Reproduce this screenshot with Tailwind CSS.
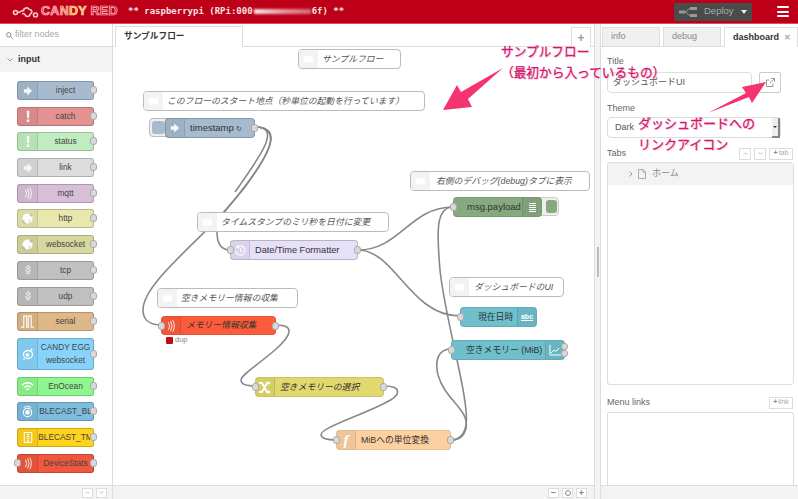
<!DOCTYPE html>
<html lang="ja">
<head>
<meta charset="utf-8">
<title>CANDY RED</title>
<script src="https://cdn.jsdelivr.net/npm/@tailwindcss/browser@4"></script>
</head>
<body class="m-0 bg-white">
<svg width="0" height="0" class="absolute">
  <symbol id="i-arrow" viewBox="0 0 12 14"><path d="M1 5h4V1.500L11 7l-6 5.500V9H1z" fill="#fff" fill-opacity=".9"/></symbol>
  <symbol id="i-bang" viewBox="0 0 12 14"><path d="M4.500 0h3.200l-.4 9H4.900zM4.600 10.500h3v3h-3z" fill="#fff" fill-opacity=".9"/></symbol>
  <symbol id="i-link" viewBox="0 0 12 14"><path d="M1 5h3V3l2 2V1l5 6-5 6V9L4 11V9H1z" fill="#fff" fill-opacity=".8"/></symbol>
  <symbol id="i-wave" viewBox="0 0 12 14"><path d="M3 2.500Q5.500 7 3 11.500M5.500 1Q9 7 5.500 13M8 0Q12 7 8 14" fill="none" stroke="#fff" stroke-opacity=".85" stroke-width="1.200"/></symbol>
  <symbol id="i-globe" viewBox="0 0 14 14"><circle cx="7" cy="7" r="6.500" fill="#fff" fill-opacity=".95"/><path d="M0 9l3 .5 1.500 4.500-3-1.500zM9 8.500l2 .5-2.500 4.500zM13.500 3.500 11 5l-2-3 2-1.500z" fill="#000" fill-opacity=".18"/></symbol>
  <symbol id="i-tcp" viewBox="0 0 12 14"><path d="M6 1l1 1-1 1zM4 3l1 1-1 1.500zM8 3l1 1-1 1.500zM6 5l1 1-1 1zM3.500 7l1 1-1 1zM8 7l1 1-1 1zM6 8l1 1-1 1zM4.500 10l1 1-1 1zM7 10l1 1-1 1z" fill="none" stroke="#fff" stroke-opacity=".8"/></symbol>
  <symbol id="i-serial" viewBox="0 0 14 14"><path d="M0 13h3V1h3v12h2V1h3v12h3" fill="none" stroke="#fff" stroke-width="1.300" stroke-opacity=".9"/></symbol>
  <symbol id="i-egg" viewBox="0 0 14 14"><ellipse cx="7" cy="7.500" rx="4.500" ry="4" fill="none" stroke="#fff" stroke-width="1.300"/><circle cx="6.500" cy="8" r="1.800" fill="#fff"/><path d="M10 1l2 2-2 1zM3 11l1 2-2-.5z" fill="#fff"/></symbol>
  <symbol id="i-wifi" viewBox="0 0 14 12"><path d="M1 4.500Q7-.5 13 4.500M3.200 7Q7 4 10.800 7M5.300 9.300Q7 8 8.700 9.300" fill="none" stroke="#fff" stroke-width="1.500"/></symbol>
  <symbol id="i-ble" viewBox="0 0 14 14"><circle cx="7" cy="8" r="4.500" fill="none" stroke="#fff" stroke-width="1.200"/><circle cx="7" cy="8" r="2.500" fill="#fff"/><path d="M3 2.500Q7 0 11 2.500" fill="none" stroke="#fff"/></symbol>
  <symbol id="i-tm" viewBox="0 0 12 14"><path d="M1.500 1h9v12h-9z" fill="none" stroke="#fff" stroke-width="1.200"/><path d="M4.500 3.500h3M4.500 6h3M4.500 8.500h3M4.500 11h3" stroke="#fff" stroke-width="1.400"/></symbol>
  <symbol id="i-bubble" viewBox="0 0 14 12"><path d="M2 1.500h10q1.500 0 1.500 4t-1.500 4H6L3 11.500V9.500H2Q.5 9.500.5 5.500T2 1.500z" fill="#fff"/></symbol>
</svg>

<div class="relative flex h-[499px] w-[798px] flex-col overflow-hidden font-['Liberation_Sans','Noto_Sans_CJK_JP',sans-serif] text-[#333]">

  <!-- header -->
  <header class="flex h-[24px] shrink-0 items-center border-b border-[#d8505f] bg-[#bd0018]">
    <svg class="ml-[12px] mr-[2px] h-[14px] w-[27px]" viewBox="0 0 27 14" fill="none" stroke="#f7c8cc" stroke-width="1.600"><circle cx="3.500" cy="7.500" r="2"/><path d="M5.500 7.500C8 7.500 9 6 11 5.500"/><path d="M11.500 6.500C11 3 16 1.500 17 4.500M17 4.500C20 4 21 8 18 9M18 9C18 12.500 13 12 13 9M13 9 10 8.500"/><circle cx="23.500" cy="10" r="2"/></svg>
    <span class="w-[78px] whitespace-nowrap text-[12.500px] font-bold tracking-[0.3px] [-webkit-text-stroke:0.7px_#ffc4cc]"><span class="text-[#e8475f]">C</span><span class="text-[#e8475f]">A</span><span class="text-[#ec7a1f]">N</span><span class="text-[#f3c21a]">D</span><span class="text-[#e5d72a]">Y</span> <span class="text-[#c8102e]">RED</span></span>
    <span class="ml-[9px] flex items-center whitespace-pre font-['DejaVu_Sans_Mono',monospace] text-[9px] font-bold text-[#f6e3e3]">** raspberrypi (RPi:000<span class="mx-[1px] h-[5px] w-[57px] bg-gradient-to-r from-white/90 via-white/60 to-white/40 blur-[1px]"></span>6f) **</span>
    <div class="ml-auto mr-[25px] flex h-[18px] w-[78px] items-center bg-[#4b4b4b]">
      <svg class="ml-[5px] h-[10px] w-[18px]" viewBox="0 0 18 10"><rect x="0" y="3.500" width="6" height="3" fill="#999"/><rect x="11" y="0" width="7" height="3" fill="#999"/><rect x="11" y="7" width="7" height="3" fill="#999"/><path d="M6 5C9 5 8 1.500 11 1.500M6 5C9 5 8 8.500 11 8.500" fill="none" stroke="#999"/></svg>
      <span class="ml-[7px] text-[9.500px] text-[#aaa]">Deploy</span>
      <svg class="ml-[7px] h-[4px] w-[6px]" viewBox="0 0 6 4"><path d="M0 0h6L3 4z" fill="#eee"/></svg>
    </div>
    <div class="mr-[9px] flex h-[11px] w-[12px] flex-col justify-between">
      <span class="h-[2px] rounded-full bg-white"></span><span class="h-[2px] rounded-full bg-white"></span><span class="h-[2px] rounded-full bg-white"></span>
    </div>
  </header>

  <main class="flex min-h-0 flex-1">
    <!-- palette -->
    <aside class="flex w-[113px] shrink-0 flex-col border-r border-[#ddd]">
      <div class="flex h-[23px] shrink-0 items-center border-b border-[#ddd] pl-[6px] text-[9px] text-[#aaa]">
        <svg class="mr-[2px] h-[7px] w-[7px]" viewBox="0 0 8 8" fill="none" stroke="#777" stroke-width="1"><circle cx="3.200" cy="3.200" r="2.500"/><path d="M5 5l2.500 2.500"/></svg>filter nodes
      </div>
      <div class="flex h-[25px] shrink-0 items-center bg-[#f3f3f3] pl-[7px] text-[9px] font-bold text-[#333]">
        <svg class="mr-[5px] h-[4px] w-[6px]" viewBox="0 0 6 4" fill="none" stroke="#999"><path d="M.5.500 3 3 5.500.500"/></svg>input
      </div>
      <div class="min-h-0 flex-1 pt-[9px] pl-[17px] text-[8.300px] leading-[17px] text-[#444]">
        <div class="relative mb-[6.700px] flex h-[19px] w-[77px] rounded-[3px] border border-black/20 bg-[#a6bbcf]"><div class="flex w-[20px] items-center justify-center border-r border-black/10 bg-black/5"><svg class="h-[12px] w-[10px]"><use href="#i-arrow"/></svg></div><span class="flex-1 text-center">inject</span><i class="absolute right-[-4px] top-[4px] h-[8px] w-[7px] rounded-[3px] border border-[#aaa] bg-[#d9d9d9]"></i></div>
        <div class="relative mb-[6.700px] flex h-[19px] w-[77px] rounded-[3px] border border-black/20 bg-[#e49191]"><div class="flex w-[20px] items-center justify-center border-r border-black/10 bg-black/5"><svg class="h-[13px] w-[10px]"><use href="#i-bang"/></svg></div><span class="flex-1 text-center">catch</span><i class="absolute right-[-4px] top-[4px] h-[8px] w-[7px] rounded-[3px] border border-[#aaa] bg-[#d9d9d9]"></i></div>
        <div class="relative mb-[6.700px] flex h-[19px] w-[77px] rounded-[3px] border border-black/20 bg-[#c0edc0]"><div class="flex w-[20px] items-center justify-center border-r border-black/10 bg-black/5"><svg class="h-[13px] w-[10px]"><use href="#i-bang"/></svg></div><span class="flex-1 text-center">status</span><i class="absolute right-[-4px] top-[4px] h-[8px] w-[7px] rounded-[3px] border border-[#aaa] bg-[#d9d9d9]"></i></div>
        <div class="relative mb-[6.700px] flex h-[19px] w-[77px] rounded-[3px] border border-black/20 bg-[#dddddd]"><div class="flex w-[20px] items-center justify-center border-r border-black/10 bg-black/5"><svg class="h-[12px] w-[10px]"><use href="#i-link"/></svg></div><span class="flex-1 text-center">link</span><i class="absolute right-[-4px] top-[4px] h-[8px] w-[7px] rounded-[3px] border border-[#aaa] bg-[#d9d9d9]"></i></div>
        <div class="relative mb-[6.700px] flex h-[19px] w-[77px] rounded-[3px] border border-black/20 bg-[#d8bfd8]"><div class="flex w-[20px] items-center justify-center border-r border-black/10 bg-black/5"><svg class="h-[13px] w-[10px]"><use href="#i-wave"/></svg></div><span class="flex-1 text-center">mqtt</span><i class="absolute right-[-4px] top-[4px] h-[8px] w-[7px] rounded-[3px] border border-[#aaa] bg-[#d9d9d9]"></i></div>
        <div class="relative mb-[6.700px] flex h-[19px] w-[77px] rounded-[3px] border border-black/20 bg-[#e7e7ae]"><div class="flex w-[20px] items-center justify-center border-r border-black/10 bg-black/5"><svg class="h-[11px] w-[11px]"><use href="#i-globe"/></svg></div><span class="flex-1 text-center">http</span><i class="absolute right-[-4px] top-[4px] h-[8px] w-[7px] rounded-[3px] border border-[#aaa] bg-[#d9d9d9]"></i></div>
        <div class="relative mb-[6.700px] flex h-[19px] w-[77px] rounded-[3px] border border-black/20 bg-[#d7d7a0]"><div class="flex w-[20px] items-center justify-center border-r border-black/10 bg-black/5"><svg class="h-[11px] w-[11px]"><use href="#i-globe"/></svg></div><span class="flex-1 text-center">websocket</span><i class="absolute right-[-4px] top-[4px] h-[8px] w-[7px] rounded-[3px] border border-[#aaa] bg-[#d9d9d9]"></i></div>
        <div class="relative mb-[6.700px] flex h-[19px] w-[77px] rounded-[3px] border border-black/20 bg-[#c0c0c0]"><div class="flex w-[20px] items-center justify-center border-r border-black/10 bg-black/5"><svg class="h-[14px] w-[10px]"><use href="#i-tcp"/></svg></div><span class="flex-1 text-center">tcp</span><i class="absolute right-[-4px] top-[4px] h-[8px] w-[7px] rounded-[3px] border border-[#aaa] bg-[#d9d9d9]"></i></div>
        <div class="relative mb-[6.700px] flex h-[19px] w-[77px] rounded-[3px] border border-black/20 bg-[#c0c0c0]"><div class="flex w-[20px] items-center justify-center border-r border-black/10 bg-black/5"><svg class="h-[14px] w-[10px]"><use href="#i-tcp"/></svg></div><span class="flex-1 text-center">udp</span><i class="absolute right-[-4px] top-[4px] h-[8px] w-[7px] rounded-[3px] border border-[#aaa] bg-[#d9d9d9]"></i></div>
        <div class="relative mb-[6.700px] flex h-[19px] w-[77px] rounded-[3px] border border-black/20 bg-[#deb887]"><div class="flex w-[20px] items-center justify-center border-r border-black/10 bg-black/5"><svg class="h-[13px] w-[13px]"><use href="#i-serial"/></svg></div><span class="flex-1 text-center">serial</span><i class="absolute right-[-4px] top-[4px] h-[8px] w-[7px] rounded-[3px] border border-[#aaa] bg-[#d9d9d9]"></i></div>
        <div class="relative mb-[6.700px] flex h-[32px] w-[77px] rounded-[3px] border border-black/20 bg-[#87d3fb]"><div class="flex w-[20px] items-center justify-center border-r border-black/10 bg-black/5"><svg class="h-[14px] w-[14px]"><use href="#i-egg"/></svg></div><span class="flex-1 pt-[2px] text-center leading-[13px]">CANDY EGG websocket</span><i class="absolute right-[-4px] top-[11px] h-[8px] w-[7px] rounded-[3px] border border-[#aaa] bg-[#d9d9d9]"></i></div>
        <div class="relative mb-[6.700px] flex h-[19px] w-[77px] rounded-[3px] border border-black/20 bg-[#8ff78f]"><div class="flex w-[20px] items-center justify-center border-r border-black/10 bg-black/5"><svg class="h-[11px] w-[13px]"><use href="#i-wifi"/></svg></div><span class="flex-1 text-center">EnOcean</span><i class="absolute right-[-4px] top-[4px] h-[8px] w-[7px] rounded-[3px] border border-[#aaa] bg-[#d9d9d9]"></i></div>
        <div class="relative mb-[6.700px] flex h-[19px] w-[77px] rounded-[3px] border border-black/20 bg-[#7ebce0]"><div class="flex w-[20px] items-center justify-center border-r border-black/10 bg-black/5"><svg class="h-[13px] w-[13px]"><use href="#i-ble"/></svg></div><span class="flex-1 text-center">BLECAST_BL</span><i class="absolute right-[-4px] top-[4px] h-[8px] w-[7px] rounded-[3px] border border-[#aaa] bg-[#d9d9d9]"></i></div>
        <div class="relative mb-[6.700px] flex h-[19px] w-[77px] rounded-[3px] border border-black/20 bg-[#ffd21c]"><div class="flex w-[20px] items-center justify-center border-r border-black/10 bg-black/5"><svg class="h-[13px] w-[10px]"><use href="#i-tm"/></svg></div><span class="flex-1 text-center">BLECAST_TM</span><i class="absolute right-[-4px] top-[4px] h-[8px] w-[7px] rounded-[3px] border border-[#aaa] bg-[#d9d9d9]"></i></div>
        <div class="relative flex h-[19px] w-[77px] rounded-[3px] border border-black/20 bg-[#f0573f]"><i class="absolute left-[-4px] top-[4px] h-[8px] w-[7px] rounded-[3px] border border-[#aaa] bg-[#d9d9d9]"></i><div class="flex w-[20px] items-center justify-center border-r border-black/10 bg-black/5"><svg class="h-[13px] w-[10px]"><use href="#i-wave"/></svg></div><span class="flex-1 text-center">DeviceStats</span><i class="absolute right-[-4px] top-[4px] h-[8px] w-[7px] rounded-[3px] border border-[#aaa] bg-[#d9d9d9]"></i></div>
      </div>
      <div class="flex h-[14px] shrink-0 items-center justify-end gap-[3px] border-t border-[#ddd] bg-[#f3f3f3] pr-[5px]">
        <span class="flex h-[10px] w-[11px] items-center justify-center border border-[#ddd] bg-white"><svg class="h-[3px] w-[5px]" viewBox="0 0 6 4" fill="none" stroke="#aaa"><path d="M.5 3.500 3 1l2.500 2.500"/></svg></span>
        <span class="flex h-[10px] w-[11px] items-center justify-center border border-[#ddd] bg-white"><svg class="h-[3px] w-[5px]" viewBox="0 0 6 4" fill="none" stroke="#aaa"><path d="M.5.500 3 3 5.500.500"/></svg></span>
      </div>
    </aside>

    <!-- workspace -->
    <section class="flex w-[482px] shrink-0 flex-col border-r border-[#ddd]">
      <div class="relative flex h-[23px] shrink-0 items-end border-b border-[#ddd] pl-[2px]">
        <div class="relative top-[1px] flex h-[21px] w-[128px] items-center border border-b-0 border-[#ddd] bg-white pl-[8px] text-[8.700px] font-bold text-[#333]">サンプルフロー</div>
        <div class="relative top-[1px] ml-auto mr-[3px] flex h-[20px] w-[20px] items-center justify-center border border-b-0 border-[#ddd] bg-white text-[12px] font-bold text-[#999]">+</div>
      </div>
      <div class="relative min-h-0 flex-1 overflow-hidden bg-white">
        <div class="absolute left-[-113px] top-[-47px] h-[499px] w-[798px] text-[9.500px] text-[#333]">
          <svg class="absolute left-0 top-0" width="798" height="499" fill="none" stroke="#888" stroke-width="1.600">
            <path d="M255 127C285 127 268 155 245 187C228 208 217 217 217 232C217 245 222 250 230 250"/>
            <path d="M255 127C283 127 270 155 242 190C213 232 143 280 143 310C143 320 150 325 161 325"/>
            <path d="M255 127C280 127 265 150 235 192"/>
            <path d="M358 250C400 250 410 207 453 207"/>
            <path d="M358 250C395 250 410 316 460 316"/>
            <path d="M453 207C435 207 437 235 440 270C445 320 470 400 466 425C464 437 458 440 451 440"/>
            <path d="M451 349C437 349 435 362 438 375C445 400 470 410 466 428C464 437 458 440 451 440"/>
            <path d="M276 325C295 325 292 335 275 350C255 367 241 375 241 380C241 385 247 386 255 386"/>
            <path d="M384 386C402 386 402 395 385 403C360 416 320 428 321 435C322 439 328 440 336 440"/>
          </svg>

          <!-- comments -->
          <div class="absolute left-[298px] top-[49px] flex h-[20px] w-[103px] overflow-hidden rounded-[4px] border border-[#bbb] bg-white italic"><div class="flex w-[19px] shrink-0 items-center justify-center bg-[#f3f3f3]"><svg class="h-[9px] w-[11px]"><use href="#i-bubble"/></svg></div><span class="flex-1 whitespace-nowrap pl-[4px] text-[8.800px] leading-[18px] text-[#555]">サンプルフロー</span></div>
          <div class="absolute left-[143px] top-[91px] flex h-[20px] w-[282px] overflow-hidden rounded-[4px] border border-[#bbb] bg-white italic"><div class="flex w-[19px] shrink-0 items-center justify-center bg-[#f3f3f3]"><svg class="h-[9px] w-[11px]"><use href="#i-bubble"/></svg></div><span class="flex-1 whitespace-nowrap pl-[4px] text-[8.800px] leading-[18px] text-[#555]">このフローのスタート地点（秒単位の起動を行っています）</span></div>
          <div class="absolute left-[197px] top-[212px] flex h-[20px] w-[192px] overflow-hidden rounded-[4px] border border-[#bbb] bg-white italic"><div class="flex w-[19px] shrink-0 items-center justify-center bg-[#f3f3f3]"><svg class="h-[9px] w-[11px]"><use href="#i-bubble"/></svg></div><span class="flex-1 whitespace-nowrap pl-[4px] text-[8.800px] leading-[18px] text-[#555]">タイムスタンプのミリ秒を日付に変更</span></div>
          <div class="absolute left-[157px] top-[288px] flex h-[20px] w-[141px] overflow-hidden rounded-[4px] border border-[#bbb] bg-white italic"><div class="flex w-[19px] shrink-0 items-center justify-center bg-[#f3f3f3]"><svg class="h-[9px] w-[11px]"><use href="#i-bubble"/></svg></div><span class="flex-1 whitespace-nowrap pl-[4px] text-[8.800px] leading-[18px] text-[#555]">空きメモリー情報の収集</span></div>
          <div class="absolute left-[410px] top-[171px] flex h-[20px] w-[180px] overflow-hidden rounded-[4px] border border-[#bbb] bg-white italic"><div class="flex w-[19px] shrink-0 items-center justify-center bg-[#f3f3f3]"><svg class="h-[9px] w-[11px]"><use href="#i-bubble"/></svg></div><span class="flex-1 whitespace-nowrap pl-[6px] text-[8.800px] leading-[18px] text-[#555]">右側のデバッグ(debug)タブに表示</span></div>
          <div class="absolute left-[449px] top-[277px] flex h-[20px] w-[115px] overflow-hidden rounded-[4px] border border-[#bbb] bg-white italic"><div class="flex w-[19px] shrink-0 items-center justify-center bg-[#f3f3f3]"><svg class="h-[9px] w-[11px]"><use href="#i-bubble"/></svg></div><span class="flex-1 whitespace-nowrap pl-[5px] text-[8.800px] leading-[18px] text-[#555]">ダッシュボードのUI</span></div>

          <!-- nodes -->
          <div class="absolute left-[149px] top-[118px] h-[19px] w-[20px] rounded-l-[4px] border border-[#bbb] bg-[#eee] p-[2px]"><div class="h-full w-[13px] rounded-[3px] bg-[#a6bbcf]"></div></div>
          <div class="absolute left-[165px] top-[118px] flex h-[20px] w-[90px] rounded-[4px] border border-black/20 bg-[#a6bbcf]"><div class="flex w-[19px] items-center justify-center border-r border-black/10 bg-black/5"><svg class="h-[12px] w-[10px]"><use href="#i-arrow"/></svg></div><span class="pl-[5px] leading-[18px]">timestamp <span class="text-[7px]">↻</span></span><i class="absolute right-[-4px] top-[5px] h-[8px] w-[7px] rounded-[3px] border border-[#aaa] bg-[#d9d9d9]"></i></div>

          <div class="absolute left-[230px] top-[240px] flex h-[20px] w-[128px] rounded-[4px] border border-black/20 bg-[#e6e0f8]"><i class="absolute left-[-4px] top-[5px] h-[8px] w-[7px] rounded-[3px] border border-[#aaa] bg-[#d9d9d9]"></i><div class="flex w-[19px] items-center justify-center border-r border-black/10 bg-black/5"><svg class="h-[11px] w-[11px]" viewBox="0 0 12 12" fill="none" stroke="#fff" stroke-width="1.100"><path d="M2.500 2.500A5 5 0 1 1 1 6"/><path d="M2 .5v2.500h2.500M6 3.500V6l2 1.500"/></svg></div><span class="pl-[5px] text-[9.200px] leading-[18px]">Date/Time Formatter</span><i class="absolute right-[-4px] top-[5px] h-[8px] w-[7px] rounded-[3px] border border-[#aaa] bg-[#d9d9d9]"></i></div>

          <div class="absolute left-[161px] top-[316px] flex h-[19px] w-[115px] rounded-[4px] border border-black/10 bg-[#fc5c3c]"><i class="absolute left-[-4px] top-[5px] h-[8px] w-[7px] rounded-[3px] border border-[#aaa] bg-[#d9d9d9]"></i><div class="flex w-[19px] items-center justify-center border-r border-black/10 bg-black/5"><svg class="h-[14px] w-[10px]"><use href="#i-wave"/></svg></div><span class="whitespace-nowrap pl-[5px] text-[8.800px] italic leading-[17px]">メモリー情報収集</span><i class="absolute right-[-4px] top-[5px] h-[8px] w-[7px] rounded-[3px] border border-[#aaa] bg-[#d9d9d9]"></i></div>
          <div class="absolute left-[166px] top-[336px] flex items-center gap-[2px] text-[7.500px] leading-[8px] text-[#888]"><span class="h-[7px] w-[7px] rounded-[1px] bg-[#c00c14]"></span>dup</div>

          <div class="absolute left-[255px] top-[377px] flex h-[20px] w-[129px] rounded-[4px] border border-black/10 bg-[#e2d96e]"><i class="absolute left-[-4px] top-[5px] h-[8px] w-[7px] rounded-[3px] border border-[#aaa] bg-[#d9d9d9]"></i><div class="flex w-[19px] items-center justify-center border-r border-black/10 bg-black/5"><svg class="h-[13px] w-[12px]" viewBox="0 0 12 13" fill="none" stroke="#fff" stroke-width="1.800"><path d="M0 2h3l5 9h2M0 11h3l5-9h2"/><path d="M9 0l3 2-3 2zM9 9l3 2-3 2z" fill="#fff" stroke="none"/></svg></div><span class="whitespace-nowrap pl-[5px] text-[8.800px] italic leading-[18px]">空きメモリーの選択</span><i class="absolute right-[-4px] top-[5px] h-[8px] w-[7px] rounded-[3px] border border-[#aaa] bg-[#d9d9d9]"></i></div>

          <div class="absolute left-[336px] top-[430px] flex h-[20px] w-[115px] rounded-[4px] border border-black/10 bg-[#fdd0a2]"><i class="absolute left-[-4px] top-[5px] h-[8px] w-[7px] rounded-[3px] border border-[#aaa] bg-[#d9d9d9]"></i><div class="flex w-[19px] items-center justify-center border-r border-black/10 bg-black/5 font-['Liberation_Serif',serif] text-[15px] font-bold italic leading-[18px] text-white">f</div><span class="whitespace-nowrap pl-[5px] text-[8.800px] leading-[18px]">MiBへの単位変換</span><i class="absolute right-[-4px] top-[5px] h-[8px] w-[7px] rounded-[3px] border border-[#aaa] bg-[#d9d9d9]"></i></div>

          <div class="absolute left-[540px] top-[197px] h-[19px] w-[19px] rounded-r-[4px] border border-[#ccc] bg-[#eee] p-[2px] pl-[5px]"><div class="h-full w-[11px] rounded-[3px] bg-[#87a980]"></div></div>
          <div class="absolute left-[453px] top-[197px] flex h-[20px] w-[89px] rounded-[4px] border border-black/10 bg-[#87a980]"><i class="absolute left-[-4px] top-[5px] h-[8px] w-[7px] rounded-[3px] border border-[#aaa] bg-[#d9d9d9]"></i><span class="flex-1 pl-[13px] leading-[18px]">msg.payload</span><div class="flex w-[19px] flex-col items-center justify-center gap-[1px] border-l border-black/10 bg-black/5"><b class="h-[1px] w-[7px] bg-white"></b><b class="h-[1px] w-[7px] bg-white"></b><b class="h-[1px] w-[7px] bg-white"></b><b class="h-[1px] w-[7px] bg-white"></b><b class="h-[1px] w-[7px] bg-white"></b></div></div>

          <div class="absolute left-[460px] top-[307px] flex h-[20px] w-[77px] rounded-[4px] border border-black/10 bg-[#6fbfcc]"><i class="absolute left-[-4px] top-[5px] h-[8px] w-[7px] rounded-[3px] border border-[#aaa] bg-[#d9d9d9]"></i><span class="flex-1 pl-[17px] text-[8.800px] leading-[18px]">現在日時</span><div class="flex w-[19px] items-center justify-center border-l border-black/10 bg-black/5 text-[7px] font-bold leading-[18px] text-white underline">abc</div></div>

          <div class="absolute left-[451px] top-[340px] flex h-[20px] w-[114px] rounded-[4px] border border-black/10 bg-[#6fbfcc]"><i class="absolute left-[-4px] top-[5px] h-[8px] w-[7px] rounded-[3px] border border-[#aaa] bg-[#d9d9d9]"></i><span class="flex-1 whitespace-nowrap pl-[14px] text-[8.800px] leading-[18px]">空きメモリー (MiB)</span><div class="flex w-[19px] items-center justify-center border-l border-black/10 bg-black/5"><svg class="h-[11px] w-[12px]" viewBox="0 0 12 11" fill="none" stroke="#fff" stroke-width="1"><path d="M1 0v10h11"/><path d="M2 8l3-3 2 1.500L10 3"/></svg></div><i class="absolute right-[-4px] top-[2px] h-[7px] w-[7px] rounded-[3px] border border-[#aaa] bg-[#d9d9d9]"></i><i class="absolute right-[-4px] top-[9px] h-[7px] w-[7px] rounded-[3px] border border-[#aaa] bg-[#d9d9d9]"></i></div>
        </div>
      </div>
      <div class="flex h-[14px] shrink-0 items-center justify-end gap-[3px] border-t border-[#ddd] bg-[#f3f3f3] pr-[7px]">
        <span class="flex h-[10px] w-[11px] items-center justify-center border border-[#ddd] bg-white"><b class="h-[1px] w-[5px] bg-[#888]"></b></span>
        <span class="flex h-[10px] w-[11px] items-center justify-center border border-[#ddd] bg-white"><b class="h-[6px] w-[6px] rounded-full border border-[#888]"></b></span>
        <span class="flex h-[10px] w-[11px] items-center justify-center border border-[#ddd] bg-white text-[9px] font-bold leading-[8px] text-[#888]">+</span>
      </div>
    </section>

    <!-- separator -->
    <div class="flex w-[5px] shrink-0 items-start justify-center bg-[#f3f3f3] pt-[223px]"><div class="h-[30px] w-[2px] bg-[#bbb]"></div></div>

    <!-- sidebar -->
    <aside class="flex min-w-0 flex-1 flex-col border-l border-[#ddd]">
      <div class="flex h-[23px] shrink-0 items-end gap-[3px] border-b border-[#ddd] pl-[1px] text-[9px]">
        <div class="relative top-[1px] flex h-[20px] w-[58px] items-center border border-[#ddd] bg-[#f0f0f0] pl-[8px] text-[#888]">info</div>
        <div class="relative top-[1px] flex h-[20px] w-[58px] items-center border border-[#ddd] bg-[#f0f0f0] pl-[8px] text-[#888]">debug</div>
        <div class="relative top-[1px] flex h-[20px] flex-1 items-center justify-between border border-b-0 border-[#ddd] bg-white pl-[8px] pr-[6px] font-bold text-[#333]">dashboard<span class="text-[8px] text-[#aaa]">✕</span></div>
      </div>
      <div class="relative min-h-0 flex-1 pl-[6px] pr-[3px] text-[9px] text-[#666]">
        <div class="pt-[9px] leading-[10px]">Title</div>
        <div class="mt-[6px] flex gap-[7px]">
          <div class="h-[21px] w-[145px] rounded-[4px] border border-[#ddd] pl-[5px] text-[9px] leading-[19px] text-[#555]">ダッシュボードUI</div>
          <div class="flex h-[21px] w-[22px] items-center justify-center rounded-[2px] border border-[#ccc]"><svg class="h-[9px] w-[9px]" viewBox="0 0 9 9" fill="none" stroke="#999"><path d="M7 5.500V8.500H.5V2H3.500M5 .5h3.500V4M8.500.5 4 5"/></svg></div>
        </div>
        <div class="mt-[10px] leading-[10px]">Theme</div>
        <div class="relative mt-[4px] flex h-[21px] w-[174px] items-center rounded-[4px] border border-[#ddd] pl-[7px] text-[#555]">Dark<span class="absolute right-0 top-0 flex h-[20px] w-[8px] items-center justify-center border-b-2 border-r-2 border-[#888] bg-[#eee]"><b class="h-0 w-0 border-x-[2px] border-t-[2px] border-x-transparent border-t-[#333]"></b></span></div>
        <div class="mt-[8px] flex h-[15px] items-center">
          <span>Tabs</span>
          <div class="ml-auto flex gap-[3px] pr-[2px] text-[7px] text-[#aaa]">
            <span class="flex h-[12px] w-[12px] items-center justify-center border border-[#ddd]"><svg class="h-[3px] w-[5px]" viewBox="0 0 6 4" fill="none" stroke="#aaa"><path d="M.5 3.500 3 1l2.500 2.500"/></svg></span>
            <span class="flex h-[12px] w-[12px] items-center justify-center border border-[#ddd]"><svg class="h-[3px] w-[5px]" viewBox="0 0 6 4" fill="none" stroke="#aaa"><path d="M.5.500 3 3 5.500.500"/></svg></span>
            <span class="flex h-[12px] w-[24px] items-center justify-center border border-[#ddd]"><b class="mr-[1px] text-[#888]">+</b>tab</span>
          </div>
        </div>
        <div class="mt-[1px] h-[223px] w-[187px] rounded-[3px] border border-[#ddd]">
          <div class="flex h-[22px] items-center bg-[#f3f3f3] pl-[21px] text-[#888]">
            <svg class="mr-[5px] h-[6px] w-[4px]" viewBox="0 0 4 6" fill="none" stroke="#999"><path d="M.5.500 3 3 .5 5.500"/></svg>
            <svg class="mr-[6px] h-[10px] w-[8px]" viewBox="0 0 8 10" fill="none" stroke="#999" stroke-width=".8"><path d="M.5.500H5L7.500 3v6.500H.5zM5 .5V3h2.500"/></svg>ホーム
          </div>
        </div>
        <div class="mt-[10px] flex h-[15px] items-center pr-[2px]">
          <span>Menu links</span>
          <span class="ml-auto flex h-[12px] w-[24px] items-center justify-center border border-[#ddd] text-[7px] text-[#aaa]"><b class="mr-[1px] text-[#888]">+</b>link</span>
        </div>
        <div class="mt-[2px] h-[74px] w-[187px] rounded-t-[3px] border border-b-0 border-[#ddd]"></div>
      </div>
      <div class="h-[14px] shrink-0 border-t border-[#ddd] bg-[#f3f3f3]"></div>
    </aside>
  </main>

  <!-- pink annotations over the page -->
  <div class="pointer-events-none absolute inset-0 font-normal text-[#d4166e] [-webkit-text-stroke:0.3px_#d4166e] [text-shadow:0_0_2px_#fff,0_0_2px_#fff,1px_1px_1px_#f6b8d4]">
    <svg class="absolute left-0 top-0" width="798" height="499" fill="#f5336f">
      <polygon points="443,110 457,85 461,92 503,68 468,99 472,107"/>
      <polygon points="766,82 742,87 746,93 708,113 749,97 752,103"/>
    </svg>
    <span class="absolute left-[501px] top-[44px] whitespace-nowrap text-[12.700px] leading-[16px]">サンプルフロー</span>
    <span class="absolute left-[501px] top-[65px] whitespace-nowrap text-[12.700px] leading-[16px]">（最初から入っているもの）</span>
    <span class="absolute left-[638px] top-[116px] whitespace-nowrap text-[13px] leading-[16px]">ダッシュボードへの</span>
    <span class="absolute left-[638px] top-[137px] whitespace-nowrap text-[13px] leading-[16px]">リンクアイコン</span>
  </div>
</div>
</body>
</html>
